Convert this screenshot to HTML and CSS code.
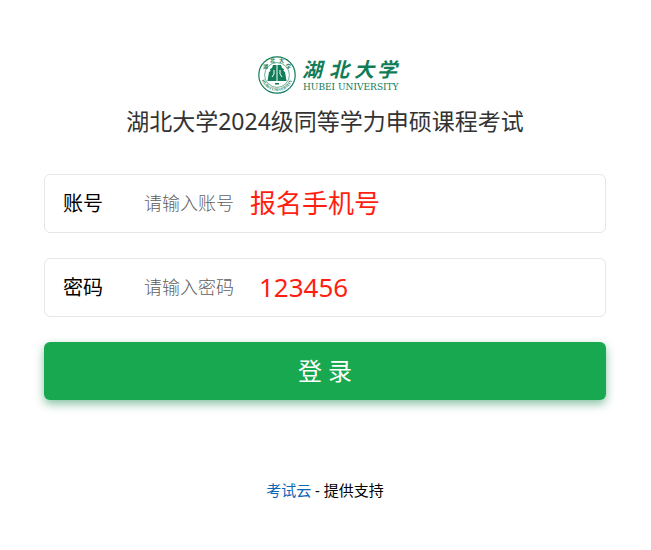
FILE: index.html
```html
<!DOCTYPE html>
<html lang="zh-CN">
<head>
<meta charset="utf-8">
<meta name="viewport" content="width=device-width, initial-scale=1">
<title>湖北大学2024级同等学力申硕课程考试</title>
<link rel="stylesheet" href="styles.css">
</head>
<body>
<main class="login">
  <header class="header">
    <svg class="logo" width="144" height="44" viewBox="0 0 144 44" role="img" aria-label="湖北大学 HUBEI UNIVERSITY">
      <defs>
        <path id="arc-bottom" d="M4 22 A16 16 0 0 0 36 22"/>
      </defs>
      <circle class="ring" cx="20" cy="22" r="18.2"/>
      <circle class="ring-thin" cx="20" cy="22" r="12.4"/>
      <g class="seal-top">
        <text x="6" y="15">湖</text>
        <text x="13" y="9">北</text>
        <text x="22" y="9">大</text>
        <text x="29" y="15">学</text>
      </g>
      <text class="seal-bottom"><textPath href="#arc-bottom" startOffset="50%" text-anchor="middle">HUBEI UNIVERSITY</textPath></text>
      <path class="solid" d="M16 12 H19.500 V28 H10.500 L12 19 L13.500 18 L13 16 L15 15 Z M20.500 12 H24 L25 15 L27 16 L26.500 18 L28 19 L29.500 28 H20.500 Z"/>
      <path class="cut" d="M17 17 V21 L15 24 M23 17 V21 L25 24"/>
      <path class="solid" d="M18 30 H22 V31.500 H18 Z"/>
      <g class="name">
        <text x="45" y="24">湖</text>
        <text x="72" y="24">北</text>
        <text x="97" y="24">大</text>
        <text x="120" y="24">学</text>
      </g>
      <text class="name-en" x="46" y="37">HUBEI UNIVERSITY</text>
    </svg>
    <h1 class="title">湖北大学2024级同等学力申硕课程考试</h1>
  </header>
  <form class="form">
    <div class="field">
      <label class="label" for="account">账号</label>
      <input class="input" id="account" type="text" placeholder="请输入账号">
      <span class="note note-account">报名手机号</span>
    </div>
    <div class="field">
      <label class="label" for="password">密码</label>
      <input class="input" id="password" type="password" placeholder="请输入密码">
      <span class="note note-password">123456</span>
    </div>
    <button class="submit" type="button">登 录</button>
  </form>
  <footer class="footer"><a class="link" href="#">考试云</a> - 提供支持</footer>
</main>
</body>
</html>
```
FILE: styles.css
```css
* {
  box-sizing: border-box;
}

body {
  margin: 0;
  background: #fff;
  color: #000;
  font-family: "Noto Sans", "Noto Sans CJK SC", sans-serif;
}

.login {
  padding: 53px 45px 40px 44px;
}

.header {
  display: flex;
  flex-direction: column;
  align-items: center;
}

.logo {
  display: block;
  margin-left: 8px;
  overflow: visible;
}

.ring,
.ring-thin {
  fill: none;
  stroke: #117c58;
  stroke-width: 1.2;
}

.ring-thin {
  stroke-width: 0.6;
}

.solid,
.name,
.name-en,
.seal-top,
.seal-bottom {
  fill: #117c58;
}

.cut {
  fill: none;
  stroke: #fff;
  stroke-width: 1;
}

.seal-top {
  font-size: 5px;
  font-weight: 700;
}

.seal-bottom {
  font: 700 4px "Liberation Serif", serif;
}

.name {
  font-family: "Noto Sans CJK SC", sans-serif;
  font-size: 20px;
  font-style: italic;
  font-weight: 700;
}

.name-en {
  font: 400 9px "DejaVu Serif", serif;
}

.title {
  margin: 7px 0 0;
  color: #333;
  font-size: 23px;
  font-weight: 400;
  line-height: 34px;
  white-space: nowrap;
}

.form {
  display: grid;
  gap: 25px;
  margin-top: 36px;
}

.field {
  position: relative;
  display: flex;
  align-items: center;
  height: 59px;
  padding: 0 18px;
  border: 1px solid #e6e6e6;
  border-radius: 6px;
}

.label {
  flex: 0 0 81px;
  font-size: 20px;
  line-height: 30px;
}

.input {
  flex: 1;
  min-width: 0;
  height: 40px;
  padding: 0 0 2px;
  border: 0;
  outline: 0;
  background: none;
  font: 300 18px "Noto Sans", "Noto Sans CJK SC", sans-serif;
}

.input::placeholder {
  color: #606060;
}

.note {
  position: absolute;
  top: 9px;
  color: #ff1e10;
  font-size: 26px;
  line-height: 38px;
  pointer-events: none;
}

.note-account {
  left: 205px;
}

.note-password {
  left: 214px;
}

.submit {
  height: 58px;
  padding: 0 0 4px;
  border: 0;
  border-radius: 6px;
  background: #18a950;
  box-shadow: 0 4px 10px rgba(17, 135, 75, 0.5);
  color: #fff;
  font: 400 24px "Noto Sans", "Noto Sans CJK SC", sans-serif;
}

.footer {
  margin-top: 79px;
  font-size: 15px;
  line-height: 22px;
  text-align: center;
}

.link {
  color: #0b66b5;
  text-decoration: none;
}
```
